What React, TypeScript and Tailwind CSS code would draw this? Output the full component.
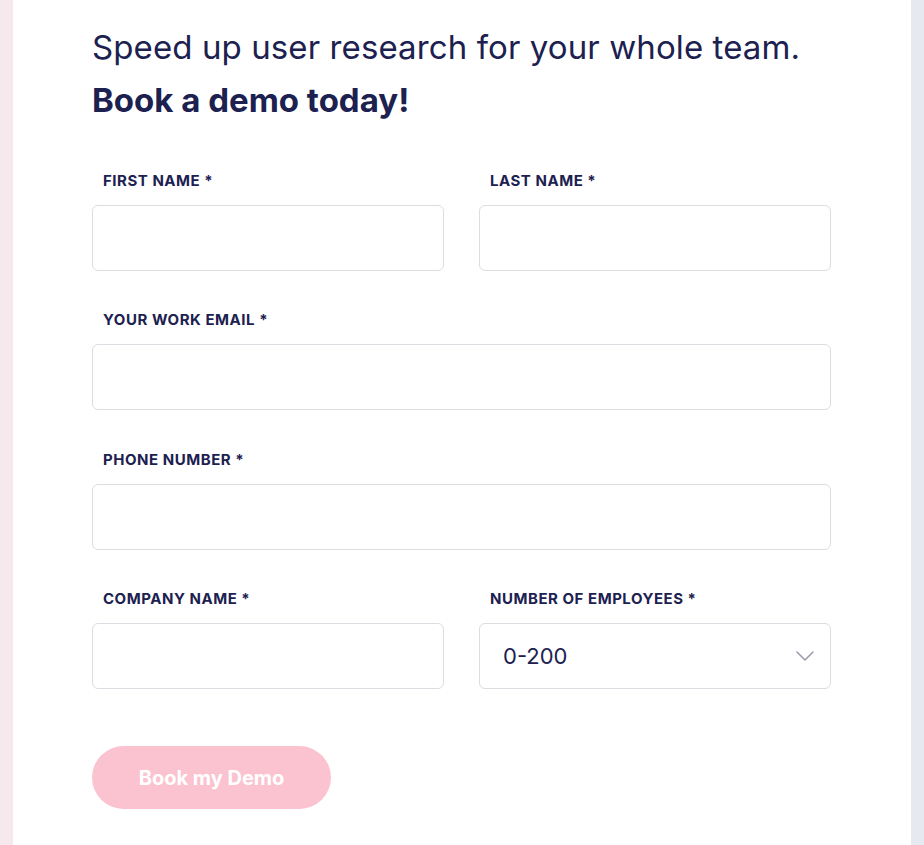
import React from "react";

function Label({ children }: { children: React.ReactNode }) {
  return (
    <label className="block pl-[11px] text-[15px] font-bold leading-[20px] tracking-[0.035em] text-[#1c2150]">
      {children}
    </label>
  );
}

function Input() {
  return (
    <div className="h-[66px] w-full rounded-[6px] border border-[#dcdde2] bg-white" />
  );
}

export default function App() {
  return (
    <div
      className="flex min-h-[845px] w-[924px] bg-white"
      style={{ fontFamily: "Inter, 'Noto Sans', sans-serif" }}
    >
      <div className="w-[13px] shrink-0 bg-[#f6e9ee]" />
      <div className="flex-1 bg-white pl-[79px] pr-[80px] pt-[27px]">
        <h1 className="text-[33px] font-normal leading-[40px] tracking-[0.003em] text-[#1c2150]">
          Speed up user research for your whole team.
        </h1>
        <h2 className="mt-[13px] text-[33px] font-bold leading-[40px] text-[#1c2150]">
          Book a demo today!
        </h2>

        <div className="mt-[51px] grid grid-cols-2 gap-x-[35px]">
          <div>
            <Label>FIRST NAME *</Label>
            <div className="mt-[14px]">
              <Input />
            </div>
          </div>
          <div>
            <Label>LAST NAME *</Label>
            <div className="mt-[14px]">
              <Input />
            </div>
          </div>
        </div>

        <div className="mt-[39px]">
          <Label>YOUR WORK EMAIL *</Label>
          <div className="mt-[14px]">
            <Input />
          </div>
        </div>

        <div className="mt-[40px]">
          <Label>PHONE NUMBER *</Label>
          <div className="mt-[14px]">
            <Input />
          </div>
        </div>

        <div className="mt-[39px] grid grid-cols-2 gap-x-[35px]">
          <div>
            <Label>COMPANY NAME *</Label>
            <div className="mt-[14px]">
              <Input />
            </div>
          </div>
          <div>
            <Label>NUMBER OF EMPLOYEES *</Label>
            <div className="mt-[14px] flex h-[66px] w-full items-center justify-between rounded-[6px] border border-[#dcdde2] bg-white pl-[23px] pr-[15px]">
              <span className="text-[22px] text-[#1c2150]">0-200</span>
              <svg width="20" height="12" viewBox="0 0 20 12" fill="none">
                <path d="M2 2l8 8 8-8" stroke="#9a9cab" strokeWidth="1.6" strokeLinecap="round" strokeLinejoin="round" />
              </svg>
            </div>
          </div>
        </div>

        <button className="mt-[57px] h-[63px] w-[239px] rounded-full bg-[#fbc3d0] text-[20px] font-bold text-white">
          Book my Demo
        </button>
      </div>
      <div className="w-[13px] shrink-0 bg-[#e6e9ef]" />
    </div>
  );
}
